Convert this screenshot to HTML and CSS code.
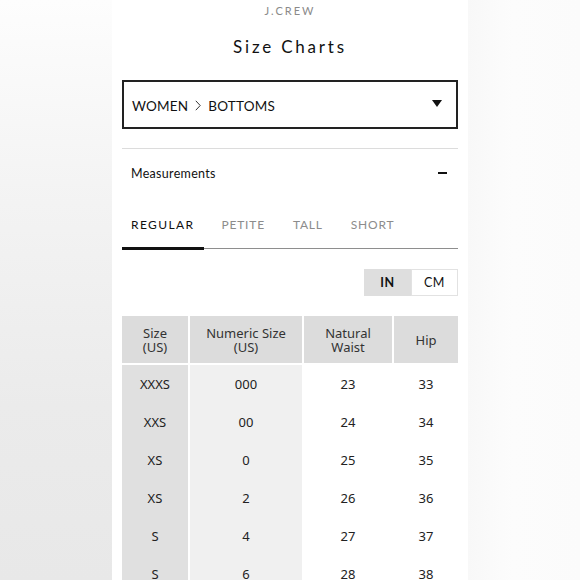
FILE: index.html
```html
<!DOCTYPE html>
<html>
<head>
<meta charset="utf-8">
<link rel="stylesheet" href="styles.css">
</head>
<body>
<div class="page">
  <div class="side side-left"></div>
  <main class="panel">
    <div class="brand">J.CREW</div>
    <h1 class="title">Size Charts</h1>
    <div class="select">
      <span class="select-text">WOMEN<svg class="chev" width="6" height="11" viewBox="0 0 6 11"><path d="M0.8 0.8L5.2 5.5L0.8 10.2" fill="none" stroke="#333" stroke-width="1"/></svg>BOTTOMS</span>
      <svg class="caret" width="10" height="7" viewBox="0 0 10 7"><path d="M0 0H10L5 7Z" fill="#111"/></svg>
    </div>
    <div class="divider"></div>
    <div class="section-head">
      <span>Measurements</span>
      <span class="minus"></span>
    </div>
    <div class="tabs">
      <div class="tab active">REGULAR</div>
      <div class="tab">PETITE</div>
      <div class="tab">TALL</div>
      <div class="tab">SHORT</div>
    </div>
    <div class="units">
      <div class="unit on">IN</div>
      <div class="unit">CM</div>
    </div>
    <div class="table">
      <div class="th c1"><span>Size</span><span>(US)</span></div>
      <div class="th c2"><span>Numeric Size</span><span>(US)</span></div>
      <div class="th c3"><span>Natural</span><span>Waist</span></div>
      <div class="th c4"><span>Hip</span></div>

      <div class="td c1">XXXS</div><div class="td c2">000</div><div class="td c3">23</div><div class="td c4">33</div>
      <div class="td c1">XXS</div><div class="td c2">00</div><div class="td c3">24</div><div class="td c4">34</div>
      <div class="td c1">XS</div><div class="td c2">0</div><div class="td c3">25</div><div class="td c4">35</div>
      <div class="td c1">XS</div><div class="td c2">2</div><div class="td c3">26</div><div class="td c4">36</div>
      <div class="td c1">S</div><div class="td c2">4</div><div class="td c3">27</div><div class="td c4">37</div>
      <div class="td c1">S</div><div class="td c2">6</div><div class="td c3">28</div><div class="td c4">38</div>
    </div>
  </main>
  <div class="side side-right"></div>
</div>
</body>
</html>
```

FILE: styles.css
```css
html, body {
  margin: 0;
  padding: 0;
  height: 100%;
  overflow: hidden;
}
body {
  font-family: "Lato", "Noto Sans", sans-serif;
  color: #111;
  background: #fff;
}
.page {
  display: flex;
  height: 580px;
  overflow: hidden;
}
.side {
  width: 112px;
  flex: none;
}
.side-left {
  background: linear-gradient(to bottom, #fdfdfd 0%, #f3f3f3 35%, #ebebeb 70%, #e8e8e8 100%);
}
.side-right {
  background: linear-gradient(to right, #f8f8f8, #fcfcfc 40%, #fbfbfb);
}
.panel {
  width: 336px;
  flex: none;
  padding: 0 10px;
  background: #fff;
  display: flex;
  flex-direction: column;
}
.panel > * {
  flex-shrink: 0;
}
.brand {
  margin-top: 3px;
  height: 16px;
  line-height: 16px;
  text-align: center;
  font-size: 11px;
  letter-spacing: 2px;
  color: #8a8a8a;
}
.title {
  margin: 17px 0 0;
  height: 22px;
  line-height: 22px;
  text-align: center;
  font-size: 17px;
  font-weight: 400;
  letter-spacing: 2.8px;
}
.select {
  margin-top: 22px;
  height: 45px;
  border: 2px solid #222;
  display: flex;
  align-items: center;
  justify-content: space-between;
  padding: 0 14px 0 8px;
}
.select-text {
  display: flex;
  align-items: center;
  font-size: 13.5px;
  letter-spacing: 0.2px;
  color: #111;
  padding-top: 2px;
}
.chev {
  margin: -1px 7px 0 7px;
}
.caret {
  margin-top: -3px;
}
.divider {
  margin-top: 19px;
  height: 1px;
  background: #dcdcdc;
}
.section-head {
  height: 48px;
  display: flex;
  align-items: center;
  justify-content: space-between;
  padding: 0 11px 0 9px;
  font-size: 12.5px;
  letter-spacing: 0.3px;
}
.minus {
  width: 9px;
  height: 1.5px;
  background: #111;
}
.tabs {
  display: flex;
  height: 50px;
  border-bottom: 1.5px solid #8e8e8e;
  margin-top: 1px;
}
.tab {
  padding: 19px 0 0 0;
  font-size: 12px;
  letter-spacing: 0.8px;
  color: #8c8c8c;
  margin-right: 28px;
}
.tab.active {
  color: #111;
  letter-spacing: 1.4px;
  padding-left: 9px;
  padding-right: 10px;
  margin-right: 17px;
  border-bottom: 3px solid #111;
  margin-bottom: -2px;
}
.units {
  align-self: flex-end;
  display: flex;
  margin-top: 20px;
  height: 27px;
}
.unit {
  width: 47px;
  display: flex;
  align-items: center;
  justify-content: center;
  font-size: 12.5px;
  letter-spacing: 0.5px;
  box-sizing: border-box;
  border: 1px solid #e2e2e2;
}
.unit.on {
  background: #dedede;
  font-weight: 700;
  border-color: #dedede;
}
.table {
  margin-top: 20px;
  display: grid;
  grid-template-columns: 66px 112px 88px 64px;
  grid-template-rows: 49px;
  grid-auto-rows: 38px;
  column-gap: 2px;
  row-gap: 0;
  font-family: "Noto Sans", "Open Sans", sans-serif;
  font-size: 13px;
  color: #222;
}
.th {
  background: #dcdcdc;
  display: flex;
  flex-direction: column;
  align-items: center;
  justify-content: center;
  text-align: center;
  line-height: 14px;
  margin-bottom: 2px;
  color: #333;
}
.td {
  display: flex;
  align-items: center;
  justify-content: center;
}
.td.c1 { background: #e0e0e0; }
.td.c2 { background: #f0f0f0; }
.td.c3, .td.c4 { background: #fff; }
```
